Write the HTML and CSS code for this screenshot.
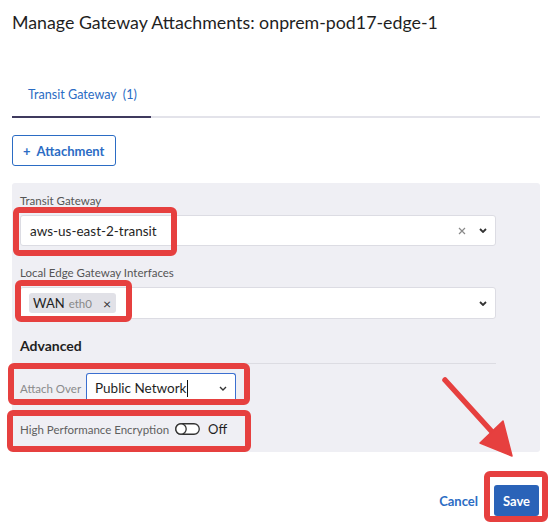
FILE: index.html
```html
<!DOCTYPE html>
<html>
<head>
<meta charset="utf-8">
<link rel="stylesheet" href="styles.css">
</head>
<body>
<div class="page">
  <h1 class="title">Manage Gateway Attachments: onprem-pod17-edge-1</h1>
  <div class="tabs">
    <div class="tab active">Transit Gateway <span class="count">(1)</span></div>
  </div>
  <button class="btn-outline"><span class="plus">+</span>Attachment</button>
  <div class="panel">
    <div class="field">
      <div class="label">Transit Gateway</div>
      <div class="select">
        <span class="value">aws-us-east-2-transit</span>
        <span class="icons">
          <svg class="clear" width="8" height="8" viewBox="0 0 8 8"><path d="M1 1L7 7M7 1L1 7" stroke="#8a8a8a" stroke-width="1.2" fill="none"/></svg>
          <svg class="chev" width="8" height="5" viewBox="0 0 8 5"><path d="M1 1L4 4L7 1" stroke="#333" stroke-width="1.8" fill="none"/></svg>
        </span>
      </div>
    </div>
    <div class="field field-2">
      <div class="label">Local Edge Gateway Interfaces</div>
      <div class="select select-tags">
        <span class="tag"><span class="tag-name">WAN</span><span class="tag-sub">eth0</span><span class="tag-x">×</span></span>
        <span class="icons">
          <svg class="chev" width="8" height="5" viewBox="0 0 8 5"><path d="M1 1L4 4L7 1" stroke="#333" stroke-width="1.8" fill="none"/></svg>
        </span>
      </div>
    </div>
    <div class="advanced">Advanced</div>
    <div class="row attach-row">
      <div class="row-label">Attach Over</div>
      <div class="select select-focus">
        <span class="value">Public Network<span class="caret"></span></span>
        <span class="icons">
          <svg class="chev" width="8" height="5" viewBox="0 0 8 5"><path d="M1 1L4 4L7 1" stroke="#333" stroke-width="1.4" fill="none"/></svg>
        </span>
      </div>
    </div>
    <div class="row hpe-row">
      <div class="row-label hpe-label">High Performance Encryption</div>
      <svg class="toggle" width="25" height="12" viewBox="0 0 25 12"><rect x="0.75" y="0.75" width="23.5" height="10.5" rx="5.25" fill="#fff" stroke="#333" stroke-width="1.3"/><circle cx="6" cy="6" r="5.2" fill="#fff" stroke="#333" stroke-width="1.3"/></svg>
      <span class="toggle-text">Off</span>
    </div>
  </div>
  <div class="footer">
    <a class="link">Cancel</a>
    <button class="btn-primary">Save</button>
  </div>
  <svg class="annot" width="551" height="524" viewBox="0 0 551 524">
    <g fill="none" stroke="#e6403f" stroke-width="6">
      <rect x="16" y="210" width="158" height="43" rx="3"/>
      <rect x="18" y="283" width="111" height="36" rx="3"/>
      <rect x="11" y="366" width="236" height="36" rx="3"/>
      <rect x="10" y="413" width="238" height="36" rx="3"/>
      <rect x="487" y="474" width="58" height="45" rx="3"/>
    </g>
    <line x1="445" y1="380" x2="494" y2="434" stroke="#e6403f" stroke-width="5.5" stroke-linecap="round"/>
    <polygon points="480,443 503,421 512,456" fill="#e6403f" stroke="#e6403f" stroke-width="1.5" stroke-linejoin="round"/>
  </svg>
</div>
</body>
</html>
```
FILE: styles.css
```css
* { box-sizing: border-box; }
html, body { margin: 0; padding: 0; background: #fff; }
body { font-family: "Lato", "Noto Sans", sans-serif; color: #222; }
.page { position: relative; width: 551px; height: 524px; padding: 10px 11px 0 12px; overflow: hidden; }
.title { margin: 0; font-size: 17.8px; line-height: 24px; font-weight: 400; color: #1f1f1f; white-space: nowrap; }
.tabs { margin-top: 41px; display: flex; border-bottom: 2px solid #e3e3ea; }
.tab { width: 139px; padding: 10px 0 11px 16px; font-size: 12.6px; line-height: 20px; color: #2b6cc4; border-bottom: 2px solid #3f3a5e; margin-bottom: -2px; white-space: nowrap; }
.count { margin-left: 3px; }
.btn-outline { margin-top: 17px; display: flex; align-items: center; height: 31px; width: 104px; padding: 0 0 0 10px; border: 1px solid #2b6cc4; border-radius: 3px; background: #fff; color: #2b6cc4; font-family: inherit; font-size: 13px; font-weight: 700; white-space: nowrap; }
.plus { margin-right: 6px; font-weight: 700; }
.panel { margin-top: 17px; background: #efeff4; border-radius: 3px; padding: 10px 44px 13px 8px; }
.label { font-size: 11.5px; line-height: 16px; color: #555; margin-bottom: 6px; }
.field-2 { margin-top: 19px; }
.select { display: flex; align-items: center; height: 31px; background: #fff; border: 1px solid #dcdce3; border-radius: 3px; padding: 0 8px 0 9px; }
.select-tags { height: 32px; padding-left: 8px; }
.value { flex: 1; font-size: 13.5px; color: #1f1f1f; white-space: nowrap; }
.icons { display: flex; align-items: center; gap: 13px; }
.clear, .chev { display: block; }
.tag { display: flex; align-items: center; height: 20px; background: #e1e1e7; border-radius: 3px; padding: 0 5px 0 4px; flex: 0 0 auto; }
.tag-name { font-size: 13px; color: #1f1f1f; }
.tag-sub { font-size: 11.5px; color: #888; margin-left: 4px; }
.tag-x { font-size: 14px; color: #333; margin-left: 11px; }
.select-tags .icons { margin-left: auto; }
.advanced { margin-top: 17px; font-size: 14px; font-weight: 700; line-height: 20px; padding-bottom: 7px; border-bottom: 1px solid #dcdce2; color: #1f1f1f; }
.row { display: flex; align-items: center; }
.attach-row { margin-top: 9px; }
.row-label { font-size: 11.5px; color: #8a8a8a; width: 66px; flex: 0 0 auto; white-space: nowrap; }
.select-focus { width: 150px; border: 1px solid #3b6fd0; border-bottom-color: #4d47a6; border-radius: 3px 3px 2px 2px; padding-left: 8px; }
.select-focus .value { font-size: 13.5px; }
.caret { display: inline-block; width: 1px; height: 17px; background: #111; vertical-align: -4px; margin-left: 1px; }
.hpe-row { margin-top: 15px; height: 20px; }
.hpe-label { width: auto; color: #5f5f5f; margin-right: 6px; }
.toggle { display: block; }
.toggle-text { margin-left: 8px; font-size: 13px; color: #1f1f1f; }
.footer { margin-top: 33px; display: flex; justify-content: flex-end; align-items: center; padding-right: 1px; }
.link { font-size: 13px; font-weight: 700; color: #2b6cc4; margin-right: 16px; }
.btn-primary { height: 31px; width: 45px; border: none; border-radius: 3px; background: #2a63b8; color: #fff; font-family: inherit; font-size: 13px; font-weight: 700; padding: 0; }
.annot { position: absolute; left: 0; top: 0; pointer-events: none; }
```
